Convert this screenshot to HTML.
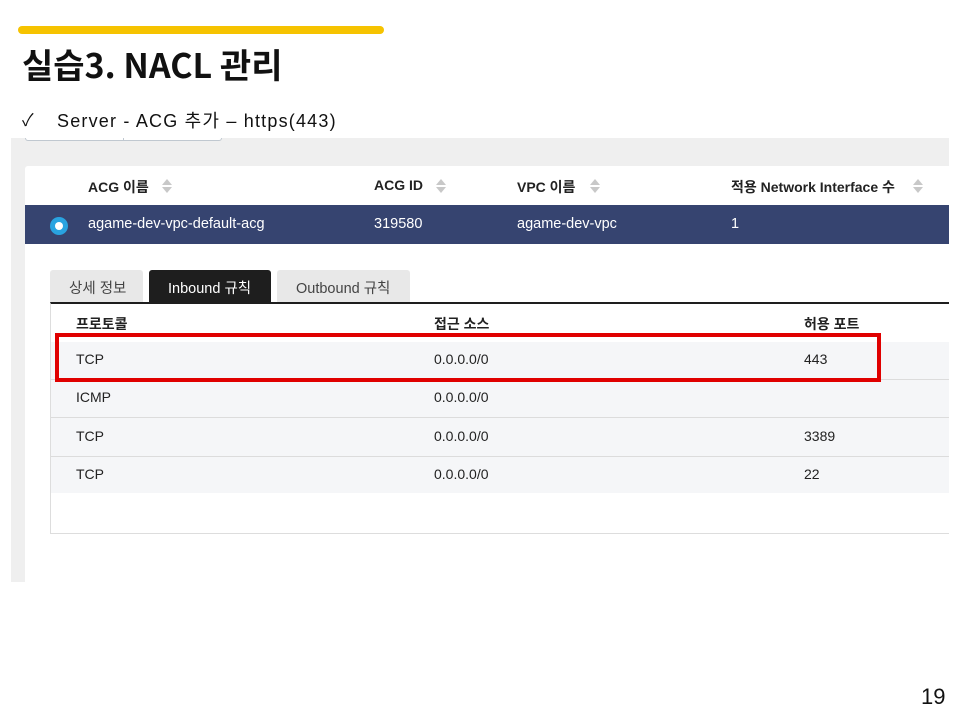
<!DOCTYPE html>
<html><head><meta charset="utf-8"><style>
*{margin:0;padding:0;box-sizing:border-box}
body{width:960px;height:720px;background:#fff;position:relative;overflow:hidden;font-family:"Liberation Sans","Noto Sans CJK KR",sans-serif;color:#222}
.a{position:absolute}
.t{font-size:14px;white-space:nowrap}
.hd{font-size:14px;font-weight:bold;white-space:nowrap;color:#222}
.sort{position:absolute;width:10px;height:14px}
.sort:before{content:"";position:absolute;left:0;top:0;border-left:5px solid transparent;border-right:5px solid transparent;border-bottom:6px solid #c8c8c8}
.sort:after{content:"";position:absolute;left:0;top:8px;border-left:5px solid transparent;border-right:5px solid transparent;border-top:6px solid #c8c8c8}
.row{position:absolute;left:51px;width:898px;background:#f5f6f8;border-bottom:1px solid #dcdcdc}
</style></head><body>
<div class="a" style="left:18px;top:26px;width:366px;height:8px;background:#f6c300;border-radius:4px"></div>
<div class="a" style="left:22px;top:41px;font-size:34px;font-weight:bold;color:#111;font-family:'Noto Sans CJK KR','Liberation Sans',sans-serif;line-height:46px">실습3. NACL 관리</div>
<div class="a" style="left:11px;top:138px;width:938px;height:444px;background:#efefef"></div>
<div class="a" style="left:25px;top:128px;width:197px;height:13px;border:1px solid #c0c8d0;border-top:none;border-radius:0 0 3px 3px;background:#fff"></div>
<div class="a" style="left:123px;top:128px;width:1px;height:13px;background:#c0c8d0"></div>
<div class="a" style="left:0;top:105px;width:880px;height:33px;background:#fff"></div>
<div class="a" style="left:22px;top:108px;font-size:17px;color:#111;line-height:26px">✓</div>
<div class="a" style="left:57px;top:108px;font-size:18px;color:#111;font-family:'Liberation Sans','Noto Sans CJK KR',sans-serif;line-height:26px;white-space:nowrap;letter-spacing:1.2px">Server - ACG 추가 – https(443)</div>
<div class="a" style="left:25px;top:166px;width:924px;height:416px;background:#fff;border-radius:3px 0 0 0"></div>
<div class="a hd" style="left:88px;top:177px">ACG 이름</div><div class="sort" style="left:162px;top:179px"></div>
<div class="a hd" style="left:374px;top:177px">ACG ID</div><div class="sort" style="left:436px;top:179px"></div>
<div class="a hd" style="left:517px;top:177px">VPC 이름</div><div class="sort" style="left:590px;top:179px"></div>
<div class="a hd" style="left:731px;top:177px">적용 Network Interface 수</div><div class="sort" style="left:913px;top:179px"></div>
<div class="a" style="left:25px;top:205px;width:924px;height:39px;background:#364470"></div>
<div class="a" style="left:50px;top:217px;width:18px;height:18px;border-radius:50%;background:#29a3e0"></div>
<div class="a" style="left:55px;top:222px;width:8px;height:8px;border-radius:50%;background:#fff"></div>
<div class="a t" style="left:88px;top:216px;color:#fff;font-size:14.5px">agame-dev-vpc-default-acg</div>
<div class="a t" style="left:374px;top:216px;color:#fff;font-size:14.5px">319580</div>
<div class="a t" style="left:517px;top:216px;color:#fff;font-size:14.5px">agame-dev-vpc</div>
<div class="a t" style="left:731px;top:216px;color:#fff;font-size:14.5px">1</div>
<div class="a" style="left:50px;top:270px;width:93px;height:33px;background:#e8e8e8;border-radius:3px 3px 0 0"></div>
<div class="a t" style="left:69px;top:277px;color:#444;font-size:14.5px">상세 정보</div>
<div class="a" style="left:149px;top:270px;width:122px;height:33px;background:#1e1e1e;border-radius:3px 3px 0 0"></div>
<div class="a t" style="left:168px;top:277px;color:#fff;font-size:14.5px">Inbound 규칙</div>
<div class="a" style="left:277px;top:270px;width:133px;height:33px;background:#e8e8e8;border-radius:3px 3px 0 0"></div>
<div class="a t" style="left:296px;top:277px;color:#444;font-size:14.5px">Outbound 규칙</div>
<div class="a" style="left:50px;top:302px;width:899px;height:232px;border-left:1px solid #ddd;border-bottom:1px solid #ddd;border-top:2px solid #1e1e1e"></div>
<div class="a hd" style="left:76px;top:314px">프로토콜</div>
<div class="a hd" style="left:434px;top:314px">접근 소스</div>
<div class="a hd" style="left:804px;top:314px">허용 포트</div>
<div class="row" style="top:342px;height:38px"></div>
<div class="row" style="top:380px;height:38px"></div>
<div class="row" style="top:418px;height:39px"></div>
<div class="row" style="top:457px;height:36px;border-bottom:none"></div>
<div class="a t" style="left:76px;top:351px">TCP</div><div class="a t" style="left:434px;top:351px">0.0.0.0/0</div><div class="a t" style="left:804px;top:351px">443</div>
<div class="a t" style="left:76px;top:389px">ICMP</div><div class="a t" style="left:434px;top:389px">0.0.0.0/0</div>
<div class="a t" style="left:76px;top:428px">TCP</div><div class="a t" style="left:434px;top:428px">0.0.0.0/0</div><div class="a t" style="left:804px;top:428px">3389</div>
<div class="a t" style="left:76px;top:466px">TCP</div><div class="a t" style="left:434px;top:466px">0.0.0.0/0</div><div class="a t" style="left:804px;top:466px">22</div>
<div class="a" style="left:55px;top:333px;width:826px;height:49px;border:4px solid #e00000"></div>
<div class="a" style="left:921px;top:684px;font-size:22px;color:#111">19</div>
</body></html>
